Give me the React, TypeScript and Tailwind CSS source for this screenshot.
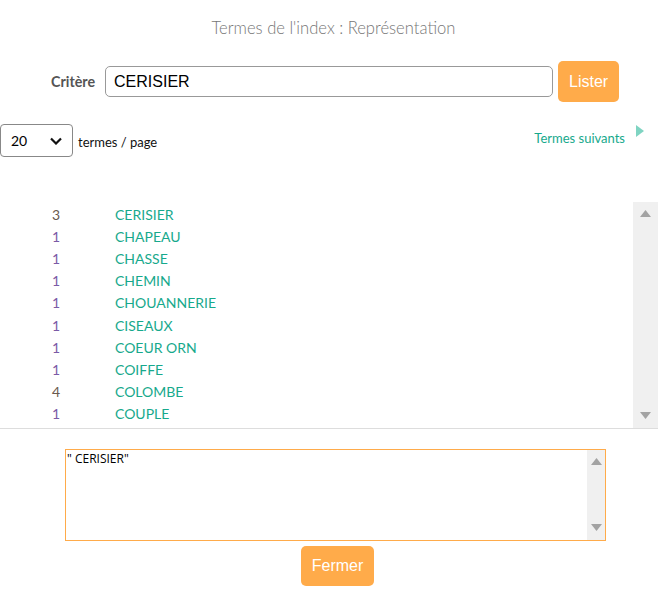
import React from "react";

const rows: [number, string][] = [
  [3, "CERISIER"],
  [1, "CHAPEAU"],
  [1, "CHASSE"],
  [1, "CHEMIN"],
  [1, "CHOUANNERIE"],
  [1, "CISEAUX"],
  [1, "COEUR ORN"],
  [1, "COIFFE"],
  [4, "COLOMBE"],
  [1, "COUPLE"],
];

const seg = { fontFamily: "Lato, 'Noto Sans', sans-serif" };
const arial = { fontFamily: "'Liberation Sans', Arial, sans-serif" };

function UpTri() {
  return (
    <svg width="11" height="7" viewBox="0 0 11 7">
      <polygon points="5.5,0 11,7 0,7" fill="#a3a3a3" />
    </svg>
  );
}
function DownTri() {
  return (
    <svg width="11" height="7" viewBox="0 0 11 7">
      <polygon points="0,0 11,0 5.5,7" fill="#a3a3a3" />
    </svg>
  );
}

export default function App() {
  return (
    <div className="w-[663px] h-[615px] bg-white overflow-hidden" style={seg}>
      <div className="pt-[17px] pl-[4px] text-center text-[16.6px] leading-[22px] font-light text-[#777]">
        Termes de l'index : Représentation
      </div>

      <div className="mt-[22px] flex items-center pl-[51px] h-[41px]">
        <span className="text-[14.3px] font-bold text-[#555] mr-[10px]">Critère</span>
        <div
          className="w-[448px] h-[31px] border border-[#999] rounded-[5px] flex items-center pl-[8px] text-[16px] text-black"
          style={arial}
        >
          CERISIER
        </div>
        <button
          className="ml-[5px] w-[61px] h-[41px] rounded-[5px] bg-[#ffab4a] text-white text-[16px]"
          style={arial}
        >
          Lister
        </button>
      </div>

      <div className="mt-[22px] flex justify-between">
        <div className="flex items-center">
          <div className="w-[73px] h-[33px] border border-[#888] rounded-[4px] flex items-center justify-between pl-[10px] pr-[10px] text-[14px] text-black">
            <span>20</span>
            <svg width="12" height="8" viewBox="0 0 12 8">
              <polyline points="1,1.5 6,6.5 11,1.5" fill="none" stroke="#111" strokeWidth="2.2" />
            </svg>
          </div>
          <span className="ml-[5px] mt-[5px] text-[13px] text-[#111]">termes / page</span>
        </div>
        <div className="flex items-start pr-[19px]">
          <span className="mt-[5px] text-[13px] text-[#17a98c]">Termes suivants</span>
          <svg className="ml-[11px] mt-[1px]" width="8" height="12" viewBox="0 0 8 12">
            <polygon points="0,0 8,6 0,12" fill="#7fd4c2" />
          </svg>
        </div>
      </div>

      <div className="mt-[45px] w-[658px] h-[227px] border-b border-[#ddd] flex">
        <div className="flex-1 pt-[1px] overflow-hidden">
          {rows.map(([n, t], i) => (
            <div key={i} className="h-[22.2px] flex items-center text-[14px]">
              <span
                className={
                  "w-[60px] text-right " + (n === 1 ? "text-[#7b5aa6]" : "text-[#6b5a4e]")
                }
              >
                {n}
              </span>
              <span className="ml-[55px] text-[#17a98c]">{t}</span>
            </div>
          ))}
        </div>
        <div className="w-[25px] bg-[#f0f0f0] flex flex-col items-center justify-between pt-[8px] pb-[9px]">
          <UpTri />
          <DownTri />
        </div>
      </div>

      <div className="mt-[20px] ml-[65px] w-[541px] h-[92px] border border-[#ffab4a] flex">
        <div className="flex-1 pl-[1px] pt-[1px] text-[12px] leading-[16px] text-black" style={{ fontFamily: "'Open Sans', sans-serif" }}>" CERISIER"</div>
        <div className="w-[18px] bg-[#f0f0f0] flex flex-col items-center justify-between pt-[8px] pb-[9px]">
          <UpTri />
          <DownTri />
        </div>
      </div>

      <div className="mt-[5px] pl-[301px]">
        <button
          className="w-[73px] h-[40px] rounded-[5px] bg-[#ffab4a] text-white text-[16px]"
          style={arial}
        >
          Fermer
        </button>
      </div>
    </div>
  );
}
